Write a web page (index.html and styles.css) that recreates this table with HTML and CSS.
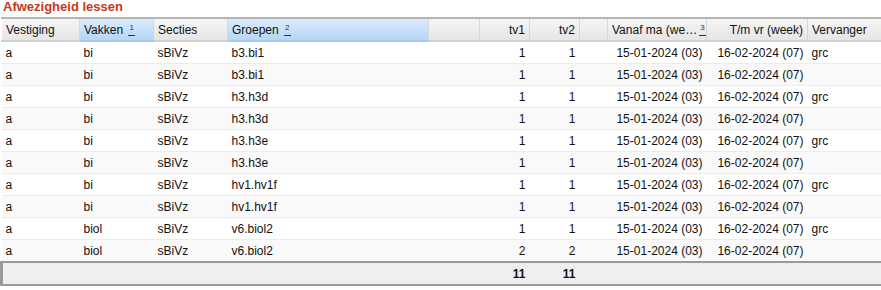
FILE: index.html
```html
<!DOCTYPE html>
<html>
<head>
<meta charset="utf-8">
<link rel="stylesheet" href="styles.css">
</head>
<body>
<div class="title">Afwezigheid lessen</div>
<table class="grid">
<colgroup>
<col class="c-vest"><col class="c-vak"><col class="c-sec"><col class="c-groep"><col class="c-e1"><col class="c-tv"><col class="c-tv"><col class="c-e2"><col class="c-van"><col class="c-tm"><col class="c-verv">
</colgroup>
<thead>
<tr>
<th>Vestiging</th>
<th class="sorted">Vakken <span class="sort">1</span></th>
<th>Secties</th>
<th class="sorted">Groepen <span class="sort">2</span></th>
<th></th>
<th class="num">tv1</th>
<th class="num">tv2</th>
<th></th>
<th><div class="hsplit"><span>Vanaf ma (we…</span><span class="sort">3</span></div></th>
<th class="num">T/m vr (week)</th>
<th>Vervanger</th>
</tr>
</thead>
<tbody>
<tr><td>a</td><td>bi</td><td>sBiVz</td><td>b3.bi1</td><td></td><td class="num">1</td><td class="num">1</td><td></td><td class="num">15-01-2024 (03)</td><td class="num">16-02-2024 (07)</td><td>grc</td></tr>
<tr><td>a</td><td>bi</td><td>sBiVz</td><td>b3.bi1</td><td></td><td class="num">1</td><td class="num">1</td><td></td><td class="num">15-01-2024 (03)</td><td class="num">16-02-2024 (07)</td><td></td></tr>
<tr><td>a</td><td>bi</td><td>sBiVz</td><td>h3.h3d</td><td></td><td class="num">1</td><td class="num">1</td><td></td><td class="num">15-01-2024 (03)</td><td class="num">16-02-2024 (07)</td><td>grc</td></tr>
<tr><td>a</td><td>bi</td><td>sBiVz</td><td>h3.h3d</td><td></td><td class="num">1</td><td class="num">1</td><td></td><td class="num">15-01-2024 (03)</td><td class="num">16-02-2024 (07)</td><td></td></tr>
<tr><td>a</td><td>bi</td><td>sBiVz</td><td>h3.h3e</td><td></td><td class="num">1</td><td class="num">1</td><td></td><td class="num">15-01-2024 (03)</td><td class="num">16-02-2024 (07)</td><td>grc</td></tr>
<tr><td>a</td><td>bi</td><td>sBiVz</td><td>h3.h3e</td><td></td><td class="num">1</td><td class="num">1</td><td></td><td class="num">15-01-2024 (03)</td><td class="num">16-02-2024 (07)</td><td></td></tr>
<tr><td>a</td><td>bi</td><td>sBiVz</td><td>hv1.hv1f</td><td></td><td class="num">1</td><td class="num">1</td><td></td><td class="num">15-01-2024 (03)</td><td class="num">16-02-2024 (07)</td><td>grc</td></tr>
<tr><td>a</td><td>bi</td><td>sBiVz</td><td>hv1.hv1f</td><td></td><td class="num">1</td><td class="num">1</td><td></td><td class="num">15-01-2024 (03)</td><td class="num">16-02-2024 (07)</td><td></td></tr>
<tr><td>a</td><td>biol</td><td>sBiVz</td><td>v6.biol2</td><td></td><td class="num">1</td><td class="num">1</td><td></td><td class="num">15-01-2024 (03)</td><td class="num">16-02-2024 (07)</td><td>grc</td></tr>
<tr><td>a</td><td>biol</td><td>sBiVz</td><td>v6.biol2</td><td></td><td class="num">2</td><td class="num">2</td><td></td><td class="num">15-01-2024 (03)</td><td class="num">16-02-2024 (07)</td><td></td></tr>
</tbody>
<tfoot>
<tr><td class="first"></td><td></td><td></td><td></td><td></td><td class="num">11</td><td class="num">11</td><td></td><td></td><td></td><td></td></tr>
</tfoot>
</table>
</body>
</html>
```

FILE: styles.css
```css
html, body {
  margin: 0;
  padding: 0;
  background: #fff;
  font-family: "Liberation Sans", Arial, sans-serif;
  font-size: 12px;
  color: #111;
}
.title {
  padding: 0 0 0 3px;
  height: 17px;
  font-size: 13px;
  font-weight: bold;
  color: #c23b22;
  line-height: 14px;
}
.grid {
  width: 881px;
  border-collapse: collapse;
  table-layout: fixed;
}
.c-vest { width: 78px; }
.c-vak { width: 74px; }
.c-sec { width: 74px; }
.c-groep { width: 201px; }
.c-e1 { width: 51px; }
.c-tv { width: 50px; }
.c-e2 { width: 28px; }
.c-van { width: 99px; }
.c-tm { width: 101px; }
.c-verv { width: 75px; }
.grid th {
  height: 21px;
  padding: 0 4px;
  text-align: left;
  font-weight: normal;
  white-space: nowrap;
  overflow: hidden;
  background: linear-gradient(#f5f5f5, #e5e5e5);
  border-top: 2px solid #b5b5b5;
  border-left: 1px solid #fff;
  border-right: 1px solid #d6d6d6;
  border-bottom: 2px solid #d0d0d0;
  color: #111;
}
.grid th.sorted {
  background: linear-gradient(#dbecfc, #b6d5f6);
  border-bottom-color: #a9c8ea;
}
.grid th.num { text-align: right; }
.hsplit {
  display: flex;
  justify-content: space-between;
  align-items: center;
}
.sort {
  display: inline-block;
  font-size: 8px;
  line-height: 8px;
  vertical-align: 4px;
  border-bottom: 1px solid #333;
  padding: 0 1px 3px;
  margin-left: 2px;
  color: #333;
}
.grid td {
  height: 21px;
  padding: 0 4px;
  white-space: nowrap;
  overflow: hidden;
  border-bottom: 1px solid #ececec;
}
.grid tbody tr:nth-child(even) td { background: #f9f9f9; }
.grid td.num { text-align: right; }
.grid tfoot td {
  height: 21px;
  background: #efefef;
  border-top: 2px solid #9a9a9a;
  border-bottom: 2px solid #9a9a9a;
  font-weight: bold;
}
.grid tfoot td.first { border-left: 3px solid #9a9a9a; }
```
